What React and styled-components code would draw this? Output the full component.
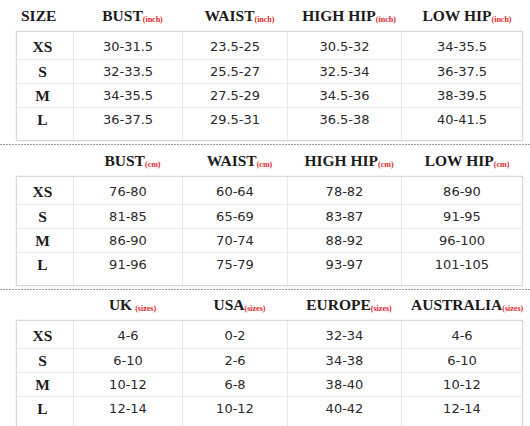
import React from 'react';
import styled, { createGlobalStyle } from 'styled-components';

const GlobalStyle = createGlobalStyle`
  body {
    margin: 0;
    background: #fff;
  }
`;

const Page = styled.div`
  width: 530px;
  height: 426px;
  overflow: hidden;
  background: #fff;
`;

const COLS = '57px 109px 105px 114px 1fr';

const Section = styled.section`
  display: flex;
  flex-direction: column;
`;

const HeadRow = styled.div`
  display: grid;
  grid-template-columns: ${COLS};
  margin: 0 7px 0 16px;
  height: ${(p) => p.height}px;
  align-items: center;
`;

const HeadCell = styled.div`
  display: flex;
  justify-content: ${(p) => (p.first ? 'flex-start' : 'center')};
  align-items: baseline;
  white-space: nowrap;
  font-family: 'Liberation Serif', 'Times New Roman', serif;
  font-weight: bold;
  font-size: 15.5px;
  color: #1c1c1c;
  margin-left: ${(p) => (p.first ? -16 : 0)}px;
  padding-left: ${(p) => (p.first ? 21 : 10)}px;
`;

const Unit = styled.span`
  font-size: 8px;
  color: #e3262b;
  margin-left: ${(p) => (p.gap ? 3 : 0)}px;
  position: relative;
  top: 1px;
`;

const Table = styled.div`
  display: grid;
  grid-template-columns: ${COLS};
  grid-template-rows: 28px 24px 24px 32px;
  margin: 0 7px 0 16px;
  border: 1px solid #d9d9d9;
  box-shadow: 0 0 2px rgba(0, 0, 0, 0.12);
  background: #fff;
`;

const Cell = styled.div`
  display: flex;
  justify-content: center;
  align-items: ${(p) => (p.pos === 'first' ? 'flex-end' : p.pos === 'last' ? 'flex-start' : 'center')};
  line-height: 24px;
  border-right: ${(p) => (p.lastCol ? 'none' : '1px solid #e8e8e8')};
  border-bottom: ${(p) => (p.pos === 'last' ? 'none' : '1px solid #e8e8e8')};
  font-family: 'DejaVu Sans', Verdana, sans-serif;
  font-size: 13px;
  color: #2a2a2a;
`;

const SizeLabel = styled.span`
  font-family: 'Liberation Serif', 'Times New Roman', serif;
  font-weight: bold;
  font-size: 15.5px;
  color: #1c1c1c;
  margin-left: -5px;
`;

const Divider = styled.div`
  height: 1px;
  margin-top: 3px;
  background: repeating-linear-gradient(to right, #9a9a9a 0 2px, transparent 2px 3px);
`;

const sections = [
  {
    headHeight: 31,
    unit: '(inch)',
    heads: ['BUST', 'WAIST', 'HIGH HIP', 'LOW HIP'],
    rows: [
      ['XS', '30-31.5', '23.5-25', '30.5-32', '34-35.5'],
      ['S', '32-33.5', '25.5-27', '32.5-34', '36-37.5'],
      ['M', '34-35.5', '27.5-29', '34.5-36', '38-39.5'],
      ['L', '36-37.5', '29.5-31', '36.5-38', '40-41.5'],
    ],
    first: 'SIZE',
  },
  {
    headHeight: 31,
    unit: '(cm)',
    heads: ['BUST', 'WAIST', 'HIGH HIP', 'LOW HIP'],
    rows: [
      ['XS', '76-80', '60-64', '78-82', '86-90'],
      ['S', '81-85', '65-69', '83-87', '91-95'],
      ['M', '86-90', '70-74', '88-92', '96-100'],
      ['L', '91-96', '75-79', '93-97', '101-105'],
    ],
  },
  {
    headHeight: 30,
    unit: '(sizes)',
    heads: ['UK', 'USA', 'EUROPE', 'AUSTRALIA'],
    rows: [
      ['XS', '4-6', '0-2', '32-34', '4-6'],
      ['S', '6-10', '2-6', '34-38', '6-10'],
      ['M', '10-12', '6-8', '38-40', '10-12'],
      ['L', '12-14', '10-12', '40-42', '12-14'],
    ],
  },
];

const SizeTable = ({ section }) => (
  <Section>
    <HeadRow height={section.headHeight}>
      <HeadCell first>{section.first || ''}</HeadCell>
      {section.heads.map((h) => (
        <HeadCell key={h}>
          {h}
          <Unit gap={h === 'UK'}>{section.unit}</Unit>
        </HeadCell>
      ))}
    </HeadRow>
    <Table>
      {section.rows.map((row, ri) => {
        const pos = ri === 0 ? 'first' : ri === section.rows.length - 1 ? 'last' : 'mid';
        return row.map((val, ci) => (
          <Cell key={`${ri}-${ci}`} pos={pos} lastCol={ci === row.length - 1}>
            {ci === 0 ? <SizeLabel>{val}</SizeLabel> : val}
          </Cell>
        ));
      })}
    </Table>
  </Section>
);

const App = () => (
  <Page>
    <GlobalStyle />
    {sections.map((s, i) => (
      <React.Fragment key={i}>
        <SizeTable section={s} />
        {i < sections.length - 1 && <Divider />}
      </React.Fragment>
    ))}
  </Page>
);

export default App;
